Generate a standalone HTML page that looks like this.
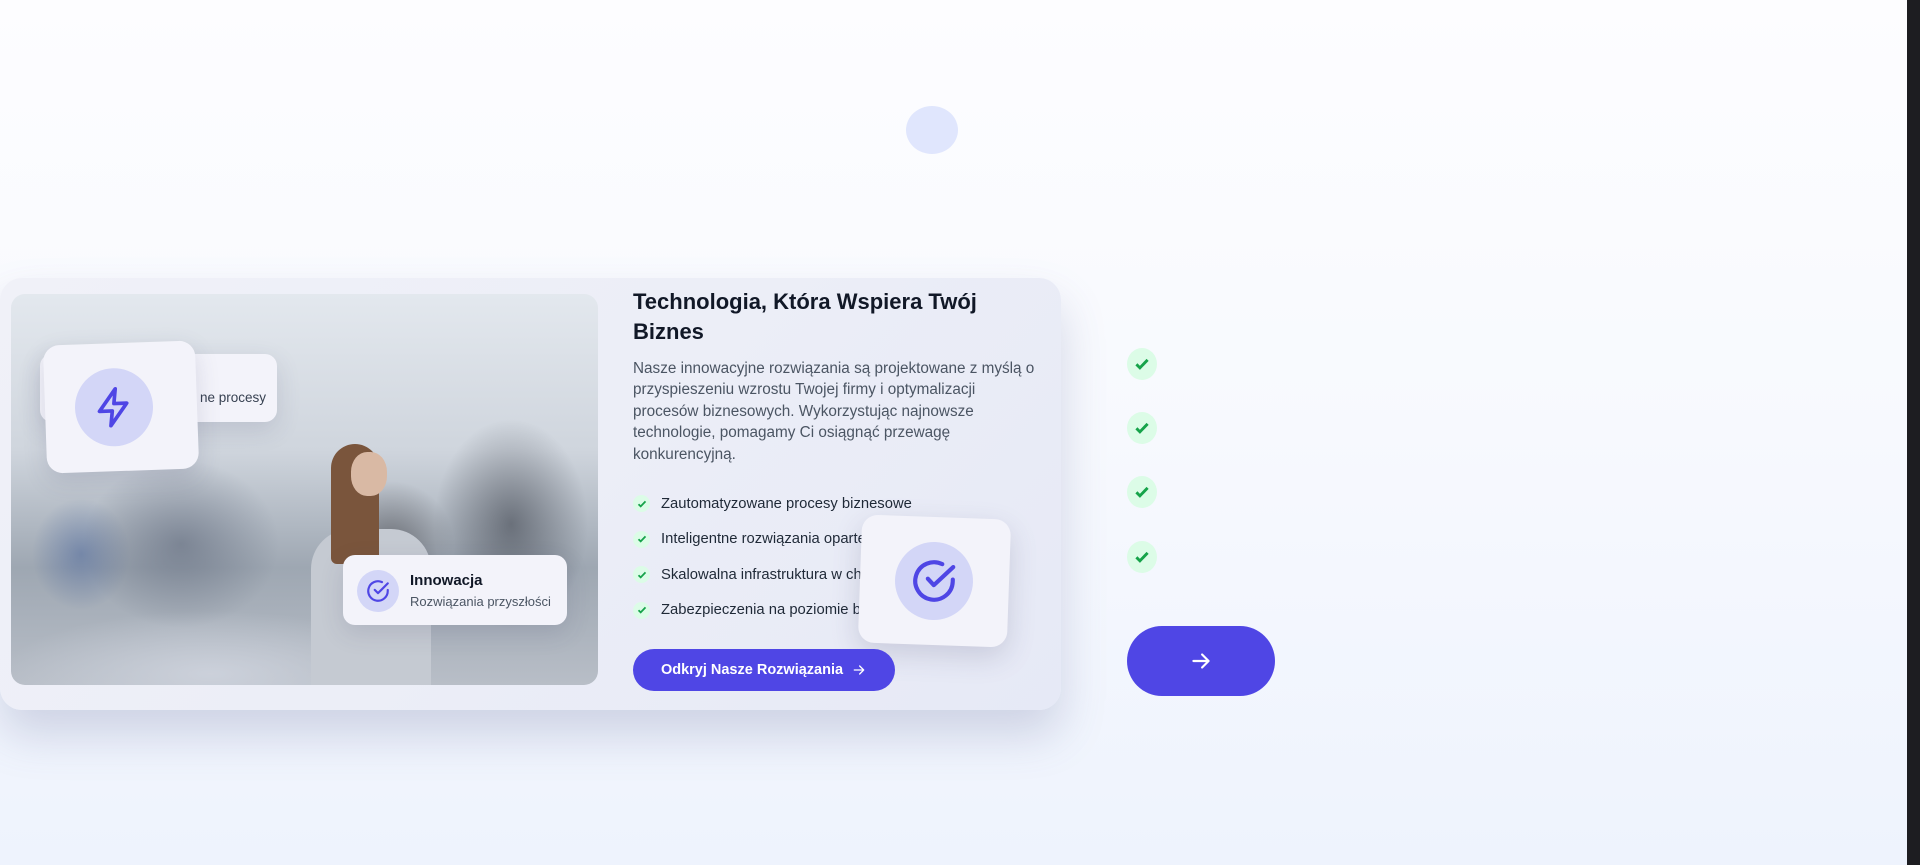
<!DOCTYPE html>
<html><head><meta charset="utf-8"><style>
*{margin:0;padding:0;box-sizing:border-box}
body{width:1920px;height:865px;overflow:hidden;font-family:"Liberation Sans",sans-serif;background:linear-gradient(180deg,#fdfdff 0%,#f7f9fe 50%,#eef3fd 100%);position:relative}
.bar{position:absolute;right:0;top:0;width:13px;height:865px;background:#1d1d21}
.blob{position:absolute;left:906px;top:106px;width:52px;height:48px;border-radius:50%;background:#e0e6fd}
.card{position:absolute;left:0;top:278px;width:1061px;height:432px;border-radius:22px;background:linear-gradient(135deg,#f0f1f8 0%,#eceef7 50%,#e6e9f6 100%);box-shadow:0 25px 45px rgba(80,90,140,.22)}
.photo{position:absolute;left:11px;top:294px;width:587px;height:391px;border-radius:14px;overflow:hidden;
background:
radial-gradient(ellipse 60px 60px at 390px 500px,rgba(60,50,45,.5),transparent 70%),
radial-gradient(ellipse 110px 150px at 500px 230px,rgba(60,65,75,.6),transparent 70%),
radial-gradient(ellipse 90px 90px at 380px 250px,rgba(60,60,65,.55),transparent 70%),
radial-gradient(ellipse 140px 120px at 170px 250px,rgba(80,90,110,.5),transparent 70%),
radial-gradient(ellipse 70px 80px at 70px 260px,rgba(60,90,150,.45),transparent 70%),
radial-gradient(ellipse 300px 90px at 200px 380px,rgba(205,210,220,.95),transparent 70%),
linear-gradient(180deg,#e3e8ee 0%,#cfd5dd 40%,#9ea7b2 70%,#b8bec7 100%);}
.photo .a{position:absolute;left:320px;top:150px;width:48px;height:120px;border-radius:24px 24px 6px 6px;background:#7a553c}
.photo .b{position:absolute;left:340px;top:158px;width:36px;height:44px;border-radius:45%;background:#d9b9a4}
.photo .s{position:absolute;left:300px;top:235px;width:120px;height:160px;border-radius:40px 40px 0 0;background:#c5cad2}
.float{position:absolute;background:#f3f3fa;border-radius:12px;box-shadow:0 8px 24px rgba(60,60,100,.15)}
h2{position:absolute;left:633px;top:287px;width:380px;font-size:22px;line-height:30px;font-weight:700;color:#111827}
p.d{position:absolute;left:633px;top:358px;width:405px;font-size:15.3px;line-height:21.4px;color:#4b5563}
ul{list-style:none;position:absolute;left:633px;top:486px}
li{height:35.5px;font-size:14.8px;color:#1f2937;display:flex;align-items:center}
.ck{width:17px;height:17px;border-radius:50%;background:#dcfce7;display:inline-flex;align-items:center;justify-content:center;margin-right:11px}
.btn{position:absolute;left:633px;top:649px;width:262px;height:42px;border-radius:21px;background:#4f46e5;color:#fff;font-size:14.5px;font-weight:700;display:flex;align-items:center;justify-content:center;gap:8px}
.rc{position:absolute;left:1127px;width:30px;height:32px;border-radius:50%;background:#dcfce7;display:flex;align-items:center;justify-content:center}
.rbtn{position:absolute;left:1127px;top:626px;width:148px;height:70px;border-radius:35px;background:#4f46e5;display:flex;align-items:center;justify-content:center}
</style></head><body>
<div class="blob"></div>
<div class="card"></div>
<div class="photo"><div class="s"></div><div class="a"></div><div class="b"></div></div>
<div class="float" style="left:40px;top:354px;width:237px;height:68px;"><span style="position:absolute;left:160px;top:36px;font-size:13.5px;color:#374151">ne procesy</span></div>
<div class="float" style="left:45px;top:343px;width:152px;height:128px;border-radius:16px;transform:rotate(-2deg)">
<div style="position:absolute;left:30px;top:25px;width:78px;height:78px;border-radius:50%;background:#d3d6f7;display:flex;align-items:center;justify-content:center">
<svg width="44" height="44" viewBox="0 0 24 24" fill="none" stroke="#4f46e5" stroke-width="2" stroke-linejoin="round" stroke-linecap="round"><path d="M13 2L4 14h7l-1 8 9-12h-7l1-8z"/></svg></div></div>
<div class="float" style="left:343px;top:555px;width:224px;height:70px">
<div style="position:absolute;left:14px;top:15px;width:42px;height:42px;border-radius:50%;background:#d3d6f7;display:flex;align-items:center;justify-content:center"><svg width="26" height="26" viewBox="0 0 24 24" fill="none" stroke="#4f46e5" stroke-width="2" stroke-linecap="round" stroke-linejoin="round"><path d="M21 11v1a9 9 0 1 1-5.3-8.2"/><path d="M9 11l3 3 9-9"/></svg></div>
<div style="position:absolute;left:67px;top:17px;font-size:15px;font-weight:700;color:#111827">Innowacja</div>
<div style="position:absolute;left:67px;top:39px;font-size:13px;color:#4b5563">Rozwiązania przyszłości</div></div>
<h2>Technologia, Która Wspiera Twój Biznes</h2>
<p class="d">Nasze innowacyjne rozwiązania są projektowane z myślą o przyspieszeniu wzrostu Twojej firmy i optymalizacji procesów biznesowych. Wykorzystując najnowsze technologie, pomagamy Ci osiągnąć przewagę konkurencyjną.</p>
<ul>
<li><span class="ck"><svg width="10" height="10" viewBox="0 0 10 10"><path d="M1.5 5.2l2.2 2.2 4.8-5" stroke="#16a34a" stroke-width="1.8" fill="none"/></svg></span>Zautomatyzowane procesy biznesowe</li>
<li><span class="ck"><svg width="10" height="10" viewBox="0 0 10 10"><path d="M1.5 5.2l2.2 2.2 4.8-5" stroke="#16a34a" stroke-width="1.8" fill="none"/></svg></span>Inteligentne rozwiązania oparte na AI</li>
<li><span class="ck"><svg width="10" height="10" viewBox="0 0 10 10"><path d="M1.5 5.2l2.2 2.2 4.8-5" stroke="#16a34a" stroke-width="1.8" fill="none"/></svg></span>Skalowalna infrastruktura w chmurze</li>
<li><span class="ck"><svg width="10" height="10" viewBox="0 0 10 10"><path d="M1.5 5.2l2.2 2.2 4.8-5" stroke="#16a34a" stroke-width="1.8" fill="none"/></svg></span>Zabezpieczenia na poziomie bankowym</li>
</ul>
<div class="float" style="left:860px;top:517px;width:149px;height:128px;border-radius:16px;transform:rotate(2deg);box-shadow:0 10px 28px rgba(60,60,100,.18)">
<div style="position:absolute;left:35px;top:25px;width:78px;height:78px;border-radius:50%;background:#d3d6f7;display:flex;align-items:center;justify-content:center"><svg width="50" height="50" viewBox="0 0 24 24" fill="none" stroke="#4f46e5" stroke-width="2" stroke-linecap="round" stroke-linejoin="round"><path d="M21 11v1a9 9 0 1 1-5.3-8.2"/><path d="M9 11l3 3 9-9"/></svg></div></div>
<div class="btn">Odkryj Nasze Rozwiązania <svg width="16" height="16" viewBox="0 0 24 24" fill="none" stroke="#fff" stroke-width="2" stroke-linecap="round" stroke-linejoin="round"><path d="M5 12h14M13 6l6 6-6 6"/></svg></div>
<div class="rc" style="top:348px"><svg width="16" height="16" viewBox="0 0 10 10"><path d="M1.5 5.2l2.2 2.2 4.8-5" stroke="#16a34a" stroke-width="1.8" fill="none"/></svg></div>
<div class="rc" style="top:412px"><svg width="16" height="16" viewBox="0 0 10 10"><path d="M1.5 5.2l2.2 2.2 4.8-5" stroke="#16a34a" stroke-width="1.8" fill="none"/></svg></div>
<div class="rc" style="top:476px"><svg width="16" height="16" viewBox="0 0 10 10"><path d="M1.5 5.2l2.2 2.2 4.8-5" stroke="#16a34a" stroke-width="1.8" fill="none"/></svg></div>
<div class="rc" style="top:541px"><svg width="16" height="16" viewBox="0 0 10 10"><path d="M1.5 5.2l2.2 2.2 4.8-5" stroke="#16a34a" stroke-width="1.8" fill="none"/></svg></div>
<div class="rbtn"><svg width="26" height="26" viewBox="0 0 24 24" fill="none" stroke="#fff" stroke-width="2" stroke-linecap="round" stroke-linejoin="round"><path d="M5 12h14M13 6l6 6-6 6"/></svg></div>
<div class="bar"></div>
</body></html>
